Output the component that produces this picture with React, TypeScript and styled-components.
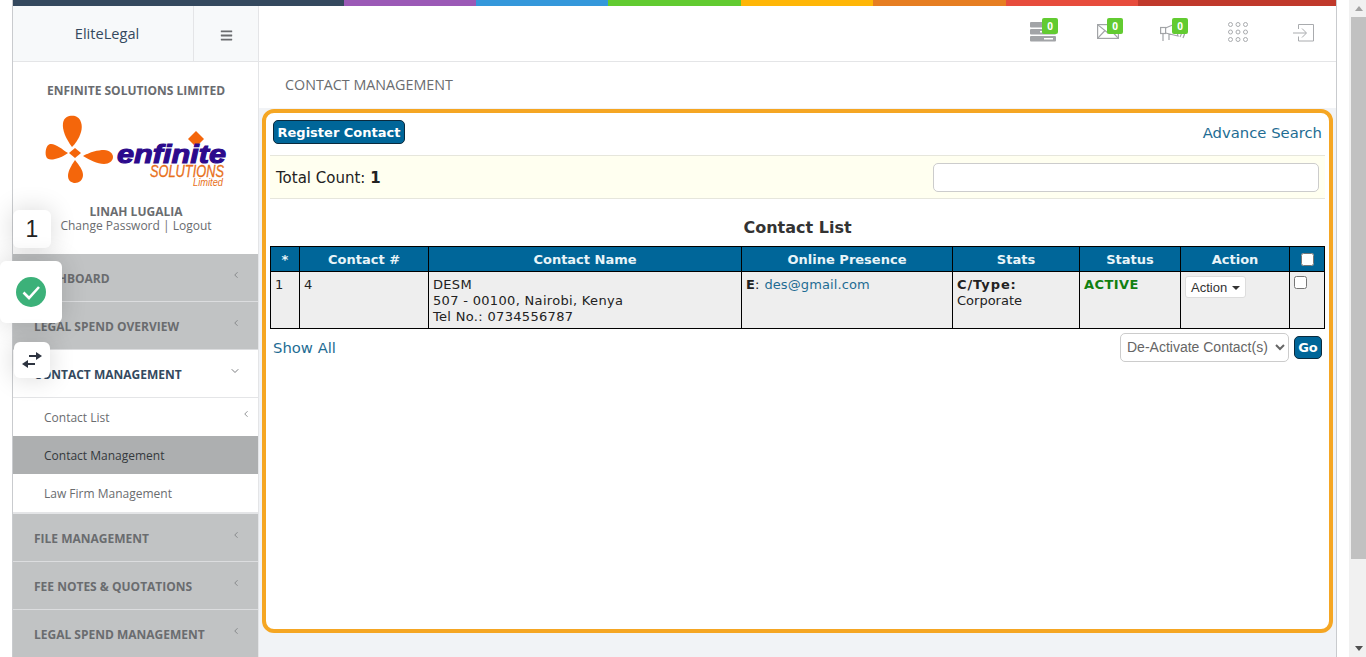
import styled, { createGlobalStyle } from 'styled-components';
import { ChevronLeft, ChevronDown } from 'lucide-react';
import { FaBars } from 'react-icons/fa';

const rainbow = [
    { color: '#34495e', width: 332 },
    { color: '#9b59b6', width: 132 },
    { color: '#3498db', width: 132 },
    { color: '#62cb31', width: 133 },
    { color: '#ffb606', width: 132 },
    { color: '#e67e22', width: 133 },
    { color: '#e74c3c', width: 132 },
    { color: '#c0392b', width: 198 },
];

const columns = [
    { label: '*', width: 29 },
    { label: 'Contact #', width: 129 },
    { label: 'Contact Name', width: 313 },
    { label: 'Online Presence', width: 211 },
    { label: 'Stats', width: 127 },
    { label: 'Status', width: 101 },
    { label: 'Action', width: 109 },
];

const GlobalStyle = createGlobalStyle`
    html, body {
        margin: 0;
        height: 657px;
        overflow: hidden;
        background: #ffffff;
    }
    * {
        box-sizing: border-box;
    }
`;

const Page = styled.div`
    display: flex;
    height: 657px;
    padding-left: 12px;
    position: relative;
    overflow: hidden;
`;

const Shell = styled.div`
    width: 1325px;
    height: 657px;
    display: flex;
    flex-direction: column;
    border-left: 1px solid #c9cbce;
    border-right: 1px solid #c9cbce;
    overflow: hidden;
`;

const Rainbow = styled.div`
    display: flex;
    height: 6px;
    flex: none;
    margin-left: -1px;
`;

const RainbowPart = styled.div<{ $color: string; $width: number }>`
    width: ${(props) => props.$width}px;
    background: ${(props) => props.$color};
`;

const Header = styled.div`
    display: flex;
    height: 56px;
    flex: none;
    border-bottom: 1px solid #e4e5e7;
`;

const Brand = styled.div`
    width: 181px;
    display: flex;
    align-items: center;
    justify-content: center;
    padding: 0 0 1px 8px;
    background: #f7f9fa;
    border-right: 1px solid #e4e5e7;
    font: 14.6px 'Open Sans', sans-serif;
    color: #34495e;
`;

const Toggle = styled.div`
    width: 65px;
    display: flex;
    align-items: center;
    justify-content: center;
    padding-top: 4px;
    background: #f7f9fa;
    border-right: 1px solid #e4e5e7;
    color: #6a6c6f;
`;

const TopNav = styled.div`
    flex: 1;
    display: flex;
    align-items: center;
    justify-content: flex-end;
    padding: 0 20px 4px 0;
    gap: 39px;
    background: #ffffff;
`;

const TopIcon = styled.div`
    position: relative;
    width: 26px;
    height: 24px;
    display: flex;
    align-items: center;
    justify-content: center;
`;

const Badge = styled.span`
    position: absolute;
    top: -2px;
    left: 12px;
    width: 16px;
    height: 16px;
    border-radius: 2px;
    background: #62cb31;
    color: #ffffff;
    font: bold 10px/16px 'Open Sans', sans-serif;
    text-align: center;
`;

const Body = styled.div`
    flex: 1;
    display: flex;
    min-height: 0;
`;

const Sidebar = styled.aside`
    width: 246px;
    flex: none;
    display: flex;
    flex-direction: column;
    background: #ffffff;
    border-right: 1px solid #e4e5e7;
    font-family: 'Open Sans', sans-serif;
`;

const Profile = styled.div`
    height: 192px;
    flex: none;
    display: flex;
    flex-direction: column;
    align-items: center;
    padding: 20px 0 0 1px;
    color: #6a6c6f;
`;

const Company = styled.div`
    font-size: 12px;
    font-weight: 700;
    line-height: 17px;
`;

const Logo = styled.svg`
    display: block;
    flex: none;
    margin: 14px 0 17px;
`;

const UserName = styled.div`
    font-size: 12px;
    font-weight: 700;
    line-height: 14px;
`;

const UserLinks = styled.div`
    font-size: 12px;
    line-height: 14px;
`;

const NavItem = styled.div<{ $open?: boolean }>`
    height: 48px;
    flex: none;
    display: flex;
    align-items: center;
    justify-content: space-between;
    padding: 2px 17px 0 21px;
    font-size: 12px;
    font-weight: 700;
    background: ${(props) => (props.$open ? '#ffffff' : '#c1c3c4')};
    color: ${(props) => (props.$open ? '#34495e' : '#6a6c6f')};
    border-bottom: 1px solid ${(props) => (props.$open ? '#e4e5e7' : '#dcdddf')};

    svg {
        margin-top: -7px;
        color: #7b7d80;
    }
`;

const SubItem = styled.div<{ $active?: boolean }>`
    height: 38px;
    flex: none;
    display: flex;
    align-items: center;
    justify-content: space-between;
    padding: 0 7px 0 31px;
    font-size: 12px;
    background: ${(props) => (props.$active ? '#adafb0' : '#ffffff')};
    color: ${(props) => (props.$active ? '#34393d' : '#6a6c6f')};

    svg {
        margin-top: -6px;
        color: #7b7d80;
    }
`;

const SubEnd = styled.div`
    height: 2px;
    flex: none;
    background: #e4e5e7;
`;

const Main = styled.main`
    flex: 1;
    min-width: 0;
    display: flex;
    flex-direction: column;
    background: #f1f3f6;
`;

const TabBar = styled.div`
    height: 46px;
    flex: none;
    display: flex;
    align-items: center;
    padding: 0 0 1px 26px;
    background: #ffffff;
    font: 14.3px 'Open Sans', sans-serif;
    color: #6a6c6f;
`;

const Content = styled.div`
    padding: 1px 3px 0;
`;

const Highlight = styled.section`
    height: 524px;
    background: #ffffff;
    border: 4px solid #f5a623;
    border-radius: 12px;
    padding: 0 4px;
    font: 13px 'DejaVu Sans', Verdana, sans-serif;
    color: #222222;
`;

const ActionRow = styled.div`
    height: 42px;
    display: flex;
    align-items: center;
    justify-content: space-between;
    padding: 0 3px 4px;
`;

const PrimaryButton = styled.button`
    height: 24px;
    padding: 1px 0 0;
    width: 132px;
    background: #006699;
    border: 1px solid #0b2a3d;
    border-radius: 5px;
    color: #ffffff;
    font: bold 13px 'DejaVu Sans', Verdana, sans-serif;
`;

const TextLink = styled.a`
    font-size: 14.8px;
    color: #1e6c93;
`;

const CountBand = styled.div`
    height: 44px;
    display: flex;
    align-items: center;
    justify-content: space-between;
    padding: 0 6px;
    background: #fffff0;
    border-top: 1px solid #e6e6dc;
    border-bottom: 1px solid #e6e6dc;
    font-size: 15px;
`;

const CountLabel = styled.span`
    padding-top: 1px;
`;

const SearchInput = styled.input`
    width: 386px;
    height: 29px;
    background: #ffffff;
    border: 1px solid #cccccc;
    border-radius: 5px;
`;

const ListTitle = styled.h2`
    margin: 0;
    height: 47px;
    padding-top: 17px;
    text-align: center;
    font: bold 16px/24px 'DejaVu Sans', Verdana, sans-serif;
    color: #333333;
`;

const Table = styled.table`
    width: 1054px;
    border-collapse: collapse;
    table-layout: fixed;
    font-size: 13px;
`;

const HeadCell = styled.th`
    height: 25px;
    padding: 0;
    background: #006699;
    color: #e8f4f8;
    border: 1px solid #000000;
    font: bold 13px 'DejaVu Sans', Verdana, sans-serif;
    text-align: center;
`;

const Cell = styled.td`
    height: 57px;
    padding: 5px 4px 0;
    background: #eeeeee;
    border: 1px solid #000000;
    vertical-align: top;
    line-height: 16px;
    color: #222222;
`;

const Address = styled.span`
    letter-spacing: 0.32px;
`;

const TypeLabel = styled.strong`
    letter-spacing: 0.9px;
`;

const Active = styled.strong`
    color: #118011;
    letter-spacing: 0.45px;
`;

const Mail = styled.a`
    margin-left: 1px;
    letter-spacing: 0.1px;
    color: #1e6c93;
`;

const SmallAction = styled.button`
    display: flex;
    align-items: center;
    gap: 5px;
    height: 22px;
    margin-top: -1px;
    padding: 0 5px;
    background: #ffffff;
    border: 1px solid #dddddd;
    border-radius: 3px;
    font: 13px 'Liberation Sans', Arial, sans-serif;
    color: #333333;
`;

const Caret = styled.span`
    width: 0;
    height: 0;
    margin-top: 1px;
    border-left: 4px solid transparent;
    border-right: 4px solid transparent;
    border-top: 4px solid #333333;
`;

const Tick = styled.input<{ $centered?: boolean }>`
    display: block;
    width: 13px;
    height: 13px;
    margin: ${(props) => (props.$centered ? '0 auto' : '-1px 0 0')};
    accent-color: #ffffff;
`;

const TableFoot = styled.div`
    display: flex;
    align-items: center;
    justify-content: space-between;
    height: 32px;
    padding: 4px 3px 0;
`;

const FootActions = styled.div`
    display: flex;
    align-items: center;
    gap: 5px;
`;

const BulkSelect = styled.select`
    width: 169px;
    height: 29px;
    padding: 0 2px;
    background: #ffffff;
    border: 1px solid #cccccc;
    border-radius: 5px;
    font: 14px 'Liberation Sans', Arial, sans-serif;
    color: #666666;
`;

const GoButton = styled.button`
    width: 28px;
    height: 23px;
    padding: 0;
    background: #006699;
    border: 1px solid #0b2a3d;
    border-radius: 5px;
    color: #ffffff;
    font: bold 13px 'DejaVu Sans', Verdana, sans-serif;
`;

const FloatCard = styled.div<{ $top: number; $left: number; $size: number }>`
    position: absolute;
    top: ${(props) => props.$top}px;
    left: ${(props) => props.$left}px;
    width: ${(props) => props.$size}px;
    height: ${(props) => props.$size}px;
    display: flex;
    align-items: center;
    justify-content: center;
    background: #ffffff;
    border-radius: 6px;
    box-shadow: 0 0 26px rgba(0, 0, 0, 0.16);
    font: 23px 'Liberation Sans', Arial, sans-serif;
    color: #222222;
`;

const Gutter = styled.div`
    width: 12px;
    flex: none;
`;

const ScrollTrack = styled.div`
    width: 17px;
    flex: none;
    display: flex;
    flex-direction: column;
    background: #f1f1f1;
`;

const ScrollThumb = styled.div`
    flex: 1;
    margin-left: 2px;
    background: #c1c1c1;
`;

const ScrollEnd = styled.div`
    height: 17px;
    flex: none;
    display: flex;
    align-items: center;
    justify-content: center;
    padding-left: 2px;
`;

const ScrollArrow = styled.span<{ $down?: boolean }>`
    width: 0;
    height: 0;
    border-left: 4px solid transparent;
    border-right: 4px solid transparent;
    ${(props) =>
        props.$down
            ? 'border-top: 5px solid #505050;'
            : 'border-bottom: 5px solid #a3a3a3;'}
`;

const BlankScroll = styled.div`
    height: 81px;
    flex: none;
`;

const ServerIcon = () => (
    <svg width="26" height="20" viewBox="0 0 26 20">
        <rect x="0" y="0" width="26" height="5.5" rx="1" fill="#a2a4a7" />
        <rect x="0" y="7" width="26" height="5.5" rx="1" fill="#a2a4a7" />
        <rect x="0" y="14" width="26" height="5.5" rx="1" fill="#a2a4a7" />
        <rect x="14" y="16" width="9" height="1.5" fill="#ffffff" />
        <rect x="10" y="9" width="2" height="1.5" fill="#ffffff" />
    </svg>
);

const MailIcon = () => (
    <svg width="22" height="15" viewBox="0 0 22 15" fill="none" stroke="#a2a4a7" strokeWidth="1.2">
        <rect x="0.6" y="0.6" width="20.8" height="13.8" />
        <path d="M0.6 0.6 L11 9 L21.4 0.6 M0.6 14.4 L8 6.5 M21.4 14.4 L14 6.5" />
    </svg>
);

const MegaphoneIcon = () => (
    <svg width="26" height="20" viewBox="0 0 26 20" fill="none" stroke="#a2a4a7" strokeWidth="1.2">
        <rect x="0.6" y="5.5" width="5" height="6" />
        <path d="M5.5 6 L15 2 L18 14 L5.5 11 M3 11.5 V19 M9 12 V18 M21 6 Q23 10 20 15 M24 5 Q26 10 23 16" />
    </svg>
);

const GridIcon = () => (
    <svg width="20" height="22" viewBox="0 -1 20 22" fill="none" stroke="#a9abae" strokeWidth="1">
        {[2.5, 10, 17.5].map((y) =>
            [2.5, 10, 17.5].map((x) => (
                <circle key={`${x}-${y}`} cx={x} cy={y} r="2" />
            )),
        )}
    </svg>
);

const EnterIcon = () => (
    <svg width="21" height="22" viewBox="0 -3 21 22" fill="none" stroke="#a9abae">
        <path d="M5.5 5 V0.5 H20.5 V17 H5.5 V12.5 M0 9 H13 M9 4.5 L13.5 9 L9 13.5" />
    </svg>
);

const SwapIcon = () => (
    <svg width="22" height="16" viewBox="0 0 22 16" fill="#2d3440" stroke="none">
        <rect x="8" y="3" width="9" height="2" />
        <path d="M15 0 L21 4 L15 8 Z" />
        <rect x="5" y="11" width="9" height="2" />
        <path d="M7 8 L1 12 L7 16 Z" />
    </svg>
);

const BrandLogo = () => (
    <Logo width="184" height="75" viewBox="0 0 184 75">
        <g fill="#f4660b">
            <path d="M28 34 C22 26 18 17 19 10 C20 3 27 2 31 3 C37 5 39 12 37 19 C35 26 31 31 28 34 Z" />
            <path d="M24 40 C18 36 11 30 6 31 C2 32 1 39 2 43 C3 47 7 47 11 46 C16 45 20 43 24 40 Z" />
            <path d="M39 43 C46 39 54 37 60 37 C66 37 69 41 69 44 C69 48 65 51 60 51 C53 51 46 47 39 43 Z" />
            <path d="M31 47 C27 53 24 58 24 63 C24 68 28 70 31 70 C35 70 39 67 39 62 C39 57 35 52 31 47 Z" />
            <path d="M31 35 L37 40 L31 45 L25 40 Z" />
            <path d="M152 18 L160 26 L152 34 L144 26 Z" />
        </g>
        <text
            x="73"
            y="50"
            textLength="109"
            lengthAdjust="spacingAndGlyphs"
            fontFamily="'Liberation Sans', Arial, sans-serif"
            fontSize="26"
            fontWeight="700"
            fontStyle="italic"
            fill="#2c0a8c"
            stroke="#2c0a8c"
            strokeWidth="1.1"
        >
            enfinite
        </text>
        <text
            x="106"
            y="64"
            textLength="74"
            lengthAdjust="spacingAndGlyphs"
            fontFamily="'Liberation Sans', Arial, sans-serif"
            fontSize="16"
            fontStyle="italic"
            fill="#e8701a"
            stroke="#e8701a"
            strokeWidth="0.3"
        >
            SOLUTIONS
        </text>
        <text
            x="149"
            y="73"
            textLength="30"
            lengthAdjust="spacingAndGlyphs"
            fontFamily="'Liberation Sans', Arial, sans-serif"
            fontSize="10"
            fontStyle="italic"
            fill="#e8701a"
        >
            Limited
        </text>
    </Logo>
);

const App = () => {
    return (
        <>
            <GlobalStyle />
            <Page>
                <Shell>
                    <Rainbow>
                        {rainbow.map((part) => (
                            <RainbowPart
                                key={part.color}
                                $color={part.color}
                                $width={part.width}
                            />
                        ))}
                    </Rainbow>
                    <Header>
                        <Brand>EliteLegal</Brand>
                        <Toggle>
                            <FaBars size={13} />
                        </Toggle>
                        <TopNav>
                            <TopIcon>
                                <ServerIcon />
                                <Badge>0</Badge>
                            </TopIcon>
                            <TopIcon>
                                <MailIcon />
                                <Badge>0</Badge>
                            </TopIcon>
                            <TopIcon>
                                <MegaphoneIcon />
                                <Badge>0</Badge>
                            </TopIcon>
                            <TopIcon>
                                <GridIcon />
                            </TopIcon>
                            <TopIcon>
                                <EnterIcon />
                            </TopIcon>
                        </TopNav>
                    </Header>
                    <Body>
                        <Sidebar>
                            <Profile>
                                <Company>ENFINITE SOLUTIONS LIMITED</Company>
                                <BrandLogo />
                                <UserName>LINAH LUGALIA</UserName>
                                <UserLinks>Change Password | Logout</UserLinks>
                            </Profile>
                            <NavItem>
                                DASHBOARD
                                <ChevronLeft size={10} />
                            </NavItem>
                            <NavItem>
                                LEGAL SPEND OVERVIEW
                                <ChevronLeft size={10} />
                            </NavItem>
                            <NavItem $open>
                                CONTACT MANAGEMENT
                                <ChevronDown size={12} />
                            </NavItem>
                            <SubItem>
                                Contact List
                                <ChevronLeft size={10} />
                            </SubItem>
                            <SubItem $active>Contact Management</SubItem>
                            <SubItem>Law Firm Management</SubItem>
                            <SubEnd />
                            <NavItem>
                                FILE MANAGEMENT
                                <ChevronLeft size={10} />
                            </NavItem>
                            <NavItem>
                                FEE NOTES &amp; QUOTATIONS
                                <ChevronLeft size={10} />
                            </NavItem>
                            <NavItem>
                                LEGAL SPEND MANAGEMENT
                                <ChevronLeft size={10} />
                            </NavItem>
                        </Sidebar>
                        <Main>
                            <TabBar>CONTACT MANAGEMENT</TabBar>
                            <Content>
                                <Highlight>
                                    <ActionRow>
                                        <PrimaryButton>Register Contact</PrimaryButton>
                                        <TextLink>Advance Search</TextLink>
                                    </ActionRow>
                                    <CountBand>
                                        <CountLabel>
                                            Total Count: <strong>1</strong>
                                        </CountLabel>
                                        <SearchInput />
                                    </CountBand>
                                    <ListTitle>Contact List</ListTitle>
                                    <Table>
                                        <colgroup>
                                            {columns.map((column) => (
                                                <col
                                                    key={column.label}
                                                    width={column.width}
                                                />
                                            ))}
                                            <col width={35} />
                                        </colgroup>
                                        <thead>
                                            <tr>
                                                {columns.map((column) => (
                                                    <HeadCell key={column.label}>
                                                        {column.label}
                                                    </HeadCell>
                                                ))}
                                                <HeadCell>
                                                    <Tick type="checkbox" $centered />
                                                </HeadCell>
                                            </tr>
                                        </thead>
                                        <tbody>
                                            <tr>
                                                <Cell>1</Cell>
                                                <Cell>4</Cell>
                                                <Cell>
                                                    <Address>
                                                        DESM
                                                        <br />
                                                        507 - 00100, Nairobi, Kenya
                                                        <br />
                                                        Tel No.: 0734556787
                                                    </Address>
                                                </Cell>
                                                <Cell>
                                                    <strong>E</strong>:{' '}
                                                    <Mail>des@gmail.com</Mail>
                                                </Cell>
                                                <Cell>
                                                    <TypeLabel>C/Type:</TypeLabel>
                                                    <br />
                                                    Corporate
                                                </Cell>
                                                <Cell>
                                                    <Active>ACTIVE</Active>
                                                </Cell>
                                                <Cell>
                                                    <SmallAction>
                                                        Action
                                                        <Caret />
                                                    </SmallAction>
                                                </Cell>
                                                <Cell>
                                                    <Tick type="checkbox" />
                                                </Cell>
                                            </tr>
                                        </tbody>
                                    </Table>
                                    <TableFoot>
                                        <TextLink>Show All</TextLink>
                                        <FootActions>
                                            <BulkSelect defaultValue="deactivate">
                                                <option value="deactivate">
                                                    De-Activate Contact(s)
                                                </option>
                                            </BulkSelect>
                                            <GoButton>Go</GoButton>
                                        </FootActions>
                                    </TableFoot>
                                </Highlight>
                            </Content>
                        </Main>
                    </Body>
                </Shell>
                <Gutter />
                <ScrollTrack>
                    <ScrollEnd>
                        <ScrollArrow />
                    </ScrollEnd>
                    <ScrollThumb />
                    <BlankScroll />
                    <ScrollEnd>
                        <ScrollArrow $down />
                    </ScrollEnd>
                </ScrollTrack>
                <FloatCard $top={210} $left={13} $size={38}>
                    1
                </FloatCard>
                <FloatCard $top={261} $left={0} $size={62}>
                    <svg width="30" height="30" viewBox="0 0 30 30">
                        <circle cx="15" cy="15" r="15" fill="#3cb179" />
                        <path
                            d="M7.5 15.5 L13 21 L23 10"
                            fill="none"
                            stroke="#ffffff"
                            strokeWidth="2.6"
                        />
                    </svg>
                </FloatCard>
                <FloatCard $top={342} $left={14} $size={36}>
                    <SwapIcon />
                </FloatCard>
            </Page>
        </>
    );
};

export default App;
